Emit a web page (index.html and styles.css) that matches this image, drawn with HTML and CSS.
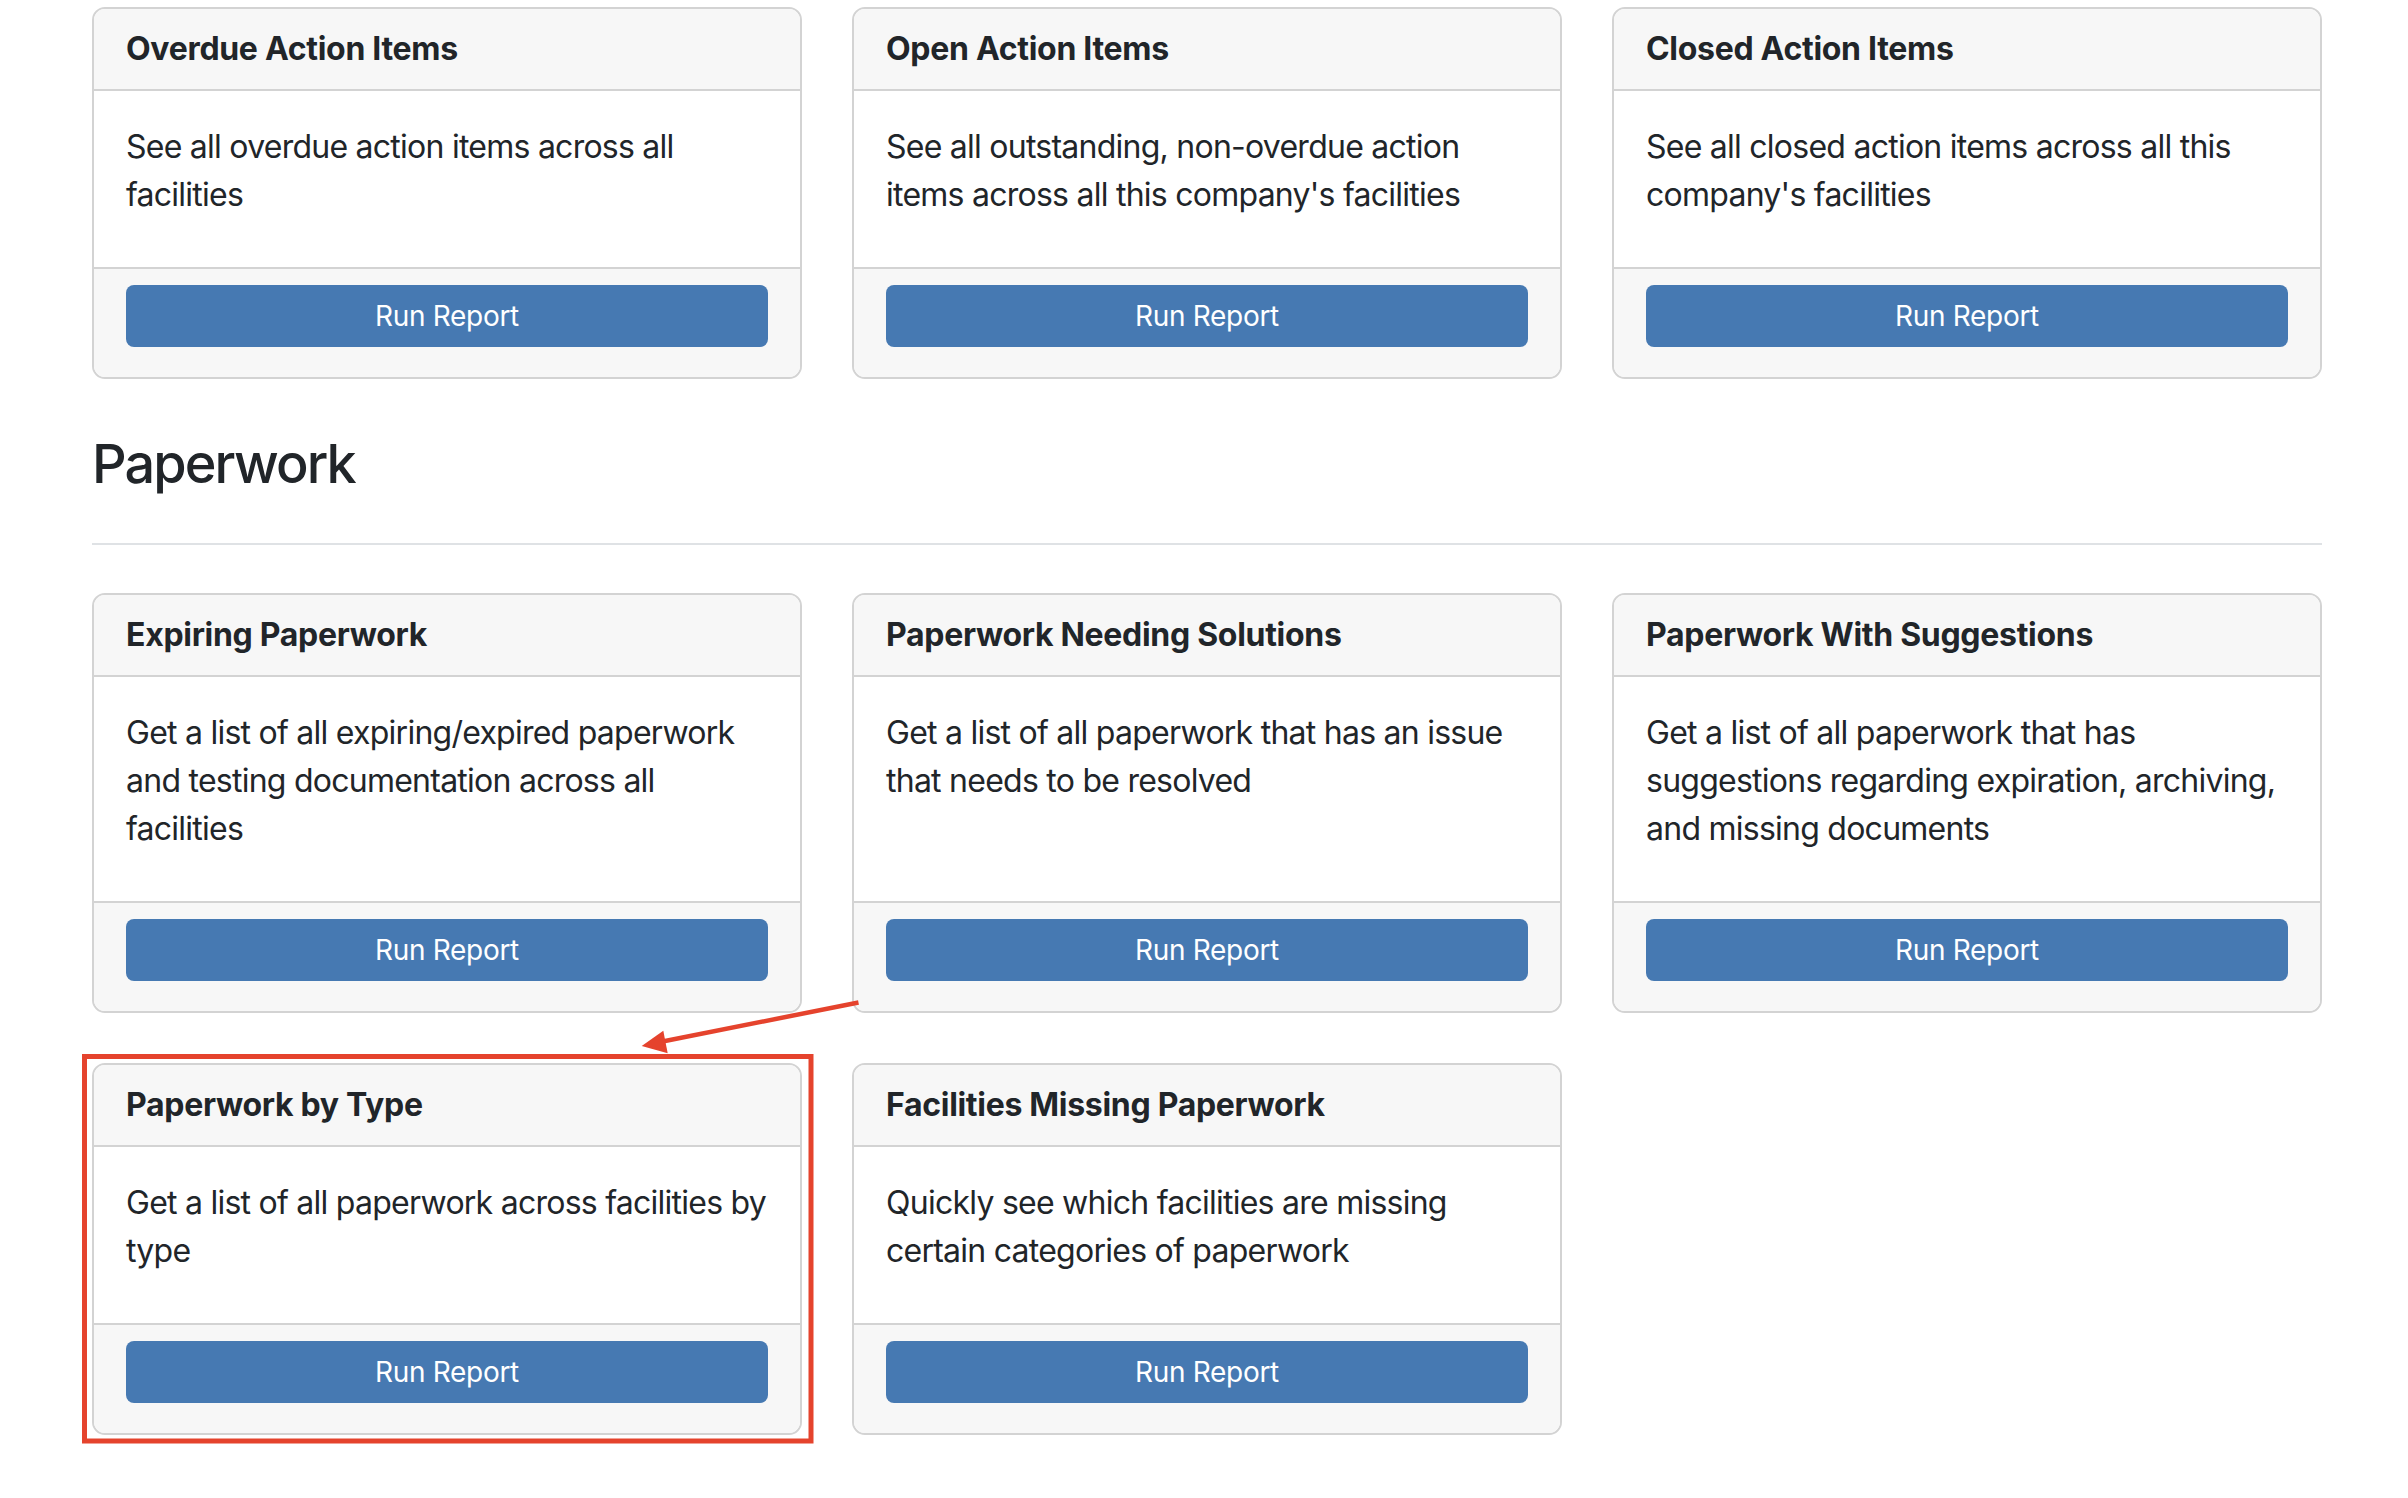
FILE: index.html
```html
<!DOCTYPE html>
<html lang="en">
<head>
<meta charset="utf-8">
<title>Reports</title>
<link rel="stylesheet" href="styles.css">
</head>
<body>
<div class="page">
  <div class="card-grid">
    <div class="card">
      <div class="card-header"><h5 class="card-title">Overdue Action Items</h5></div>
      <div class="card-body"><p class="card-text">See all overdue action items across all facilities</p></div>
      <div class="card-footer"><button class="btn">Run Report</button></div>
    </div>
    <div class="card">
      <div class="card-header"><h5 class="card-title">Open Action Items</h5></div>
      <div class="card-body"><p class="card-text">See all outstanding, non-overdue action items across all this company's facilities</p></div>
      <div class="card-footer"><button class="btn">Run Report</button></div>
    </div>
    <div class="card">
      <div class="card-header"><h5 class="card-title">Closed Action Items</h5></div>
      <div class="card-body"><p class="card-text">See all closed action items across all this company's facilities</p></div>
      <div class="card-footer"><button class="btn">Run Report</button></div>
    </div>
  </div>

  <h3 class="section-title">Paperwork</h3>
  <hr class="divider">

  <div class="card-grid">
    <div class="card">
      <div class="card-header"><h5 class="card-title">Expiring Paperwork</h5></div>
      <div class="card-body"><p class="card-text">Get a list of all expiring/expired paperwork and testing documentation across all facilities</p></div>
      <div class="card-footer"><button class="btn">Run Report</button></div>
    </div>
    <div class="card">
      <div class="card-header"><h5 class="card-title">Paperwork Needing Solutions</h5></div>
      <div class="card-body"><p class="card-text">Get a list of all paperwork that has an issue that needs to be resolved</p></div>
      <div class="card-footer"><button class="btn">Run Report</button></div>
    </div>
    <div class="card">
      <div class="card-header"><h5 class="card-title">Paperwork With Suggestions</h5></div>
      <div class="card-body"><p class="card-text">Get a list of all paperwork that has suggestions regarding expiration, archiving, and missing documents</p></div>
      <div class="card-footer"><button class="btn">Run Report</button></div>
    </div>
    <div class="card">
      <div class="card-header"><h5 class="card-title">Paperwork by Type</h5></div>
      <div class="card-body"><p class="card-text">Get a list of all paperwork across facilities by type</p></div>
      <div class="card-footer"><button class="btn">Run Report</button></div>
    </div>
    <div class="card">
      <div class="card-header"><h5 class="card-title">Facilities Missing Paperwork</h5></div>
      <div class="card-body"><p class="card-text">Quickly see which facilities are missing certain categories of paperwork</p></div>
      <div class="card-footer"><button class="btn">Run Report</button></div>
    </div>
  </div>

  <svg class="annotation" width="2408" height="1498" viewBox="0 0 2408 1498" aria-hidden="true">
    <rect x="84.5" y="1056.5" width="726.5" height="384.5" fill="none" stroke="#e5432d" stroke-width="5"/>
    <line x1="858.5" y1="1002.5" x2="660" y2="1042" stroke="#e5432d" stroke-width="4.5"/>
    <polygon points="641.7,1046 663.3,1030.7 667.7,1053.3" fill="#e5432d"/>
  </svg>
</div>
</body>
</html>
```

FILE: styles.css
```css
* {
  box-sizing: border-box;
}

html, body {
  margin: 0;
  padding: 0;
  background: #ffffff;
}

body {
  font-family: Inter, "Liberation Sans", Arial, sans-serif;
  color: #212529;
  font-size: 32px;
  line-height: 48px;
}

.page {
  position: relative;
  width: 2408px;
  min-height: 1498px;
  padding: 7px 0 0 92px;
}

.card-grid {
  display: grid;
  grid-template-columns: repeat(3, 710px);
  column-gap: 50px;
  row-gap: 50px;
}

.card {
  display: flex;
  flex-direction: column;
  border: 2px solid #d3d3d3;
  border-radius: 13px;
  background: #ffffff;
  overflow: hidden;
}

.card-header {
  background: #f7f7f7;
  border-bottom: 2px solid #d3d3d3;
  padding: 16px 32px;
}

.card-title {
  margin: 0;
  font-size: 32px;
  line-height: 48px;
  font-weight: 700;
  letter-spacing: -0.3px;
}

.card-body {
  flex: 1 1 auto;
  padding: 32px 22px 48px 32px;
}

.card-text {
  margin: 0;
  letter-spacing: -0.75px;
}

.card-footer {
  background: #f7f7f7;
  border-top: 2px solid #d3d3d3;
  padding: 16px 32px 30px;
}

.btn {
  display: block;
  width: 100%;
  height: 62px;
  margin: 0;
  padding: 0;
  border: 0;
  border-radius: 8px;
  background: #4679b2;
  color: #ffffff;
  font-family: Inter, "Liberation Sans", Arial, sans-serif;
  font-size: 28px;
  line-height: 62px;
  letter-spacing: -0.3px;
  text-align: center;
}

.section-title {
  margin: 51.5px 0 0;
  font-size: 54px;
  line-height: 65px;
  font-weight: 500;
  letter-spacing: -1.9px;
}

.divider {
  width: 2230px;
  margin: 47px 0 48px;
  border: 0;
  border-top: 2px solid #dfe2e5;
  height: 0;
}

.annotation {
  position: absolute;
  left: 0;
  top: 0;
  pointer-events: none;
}
```
